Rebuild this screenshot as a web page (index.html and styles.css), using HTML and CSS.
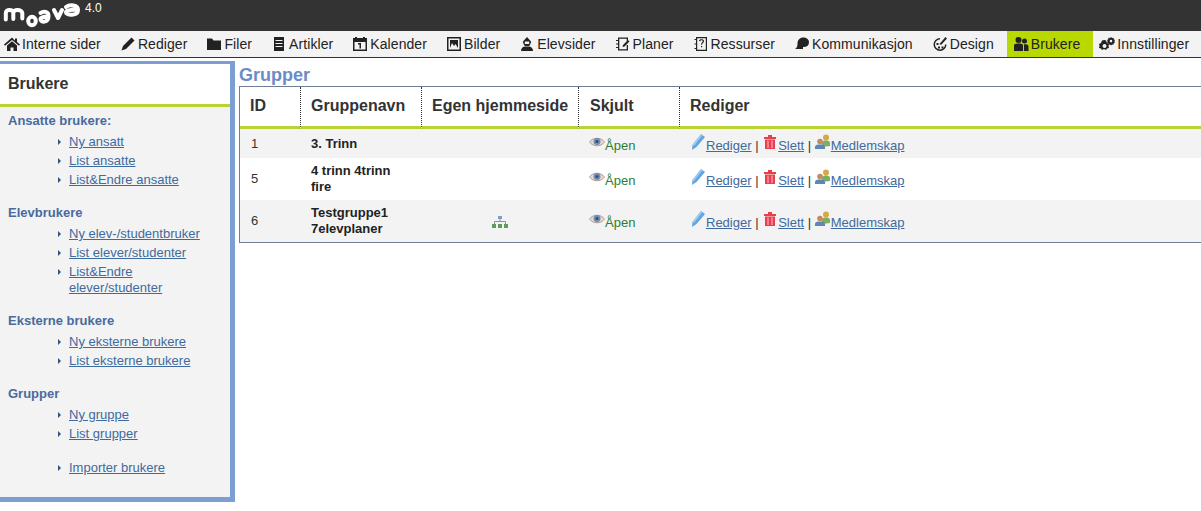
FILE: index.html
```html
<!DOCTYPE html>
<html lang="no">
<head>
<meta charset="utf-8">
<title>Moava - Grupper</title>
<link rel="stylesheet" href="styles.css">
</head>
<body>
<header class="topbar">
  <svg class="logo" width="82" height="30" viewBox="0 0 82 30" fill="none" stroke="#fff" stroke-width="4" stroke-linecap="round" stroke-linejoin="round">
    <path d="M5.800 19.500V13c0-4 7.500-4 7.500 0v6M13.300 13c0-4 8-4 9 0v5.500"/>
    <ellipse cx="32" cy="21" rx="3.800" ry="4.300"/>
    <path d="M40.500 13c3-2 8-2 8 3 0 7-8 7-8 3 0-2 4-2.500 8-2.500"/>
    <path d="M54 10l4 8 4-8"/>
    <path d="M66 7c4-3 12-2 12 3 0 6-12 6-12 2 0-2 6-2.500 12-2.500"/>
  </svg>
  <span class="version">4.0</span>
</header>
<nav class="mainnav">
  <a class="navitem" href="#"><svg class="navicon" viewBox="0 0 16 16"><path d="M8 1.500 0 8.500l1 1.300L8 4l7 5.800 1-1.300-3-2.600V2.500h-2v2.200zM3 9.500 8 5.300l5 4.200V15H9.500v-3.500h-3V15H3z"/></svg>Interne sider</a>
  <a class="navitem" href="#"><svg class="navicon" viewBox="0 0 16 16"><path d="M11.500 1.500l3 3-8.500 8.500-4.500 1.500 1.500-4.500z"/></svg>Rediger</a>
  <a class="navitem" href="#"><svg class="navicon" viewBox="0 0 16 16"><path d="M1 2.500h5l1.500 2H15v9.500H1z"/></svg>Filer</a>
  <a class="navitem" href="#"><svg class="navicon" viewBox="0 0 16 16"><path fill-rule="evenodd" d="M3 1h10v14H3zM4.500 4v1h7V4zm0 3v1h7V7zm0 3v1h7v-1z"/></svg>Artikler</a>
  <a class="navitem" href="#"><svg class="navicon" viewBox="0 0 16 16"><path fill-rule="evenodd" d="M1 2h14v13H1zM2.500 6v7.500h11V6z"/><path d="M6 7h3v5.500H7.500V8.500H6zM3 1h2v3H3zM11 1h2v3h-2z"/></svg>Kalender</a>
  <a class="navitem" href="#"><svg class="navicon" viewBox="0 0 16 16"><path fill-rule="evenodd" d="M1 1h14v14H1zM2.500 2.500v11h11v-11z"/><path d="M4 4h8v8l-2.500-4L8 10 6 7l-2 5z"/></svg>Bilder</a>
  <a class="navitem" href="#"><svg class="navicon" viewBox="0 0 16 16"><path fill-rule="evenodd" d="M8 1l4 4.500c0 1-.5 3-1.500 4l-.5.5H6l-.5-.5C4.500 8.500 4 6.500 4 5.500zM5.800 5.500V8h4.400V5.500z"/><path d="M2 15c0-3 2-4.500 4-4.500h4c2 0 4 1.500 4 4.500z"/></svg>Elevsider</a>
  <a class="navitem" href="#"><svg class="navicon" viewBox="0 0 16 16"><path d="M3 1.500h10v4h-1.300V2.800H4.300v10.400h7.400V9H13v5.500H3zM1 4h3v1H1zM1 7.500h3v1H1zM1 11h3v1H1zM8 9l5-5 1.500 1.500-5 5L7.500 11z"/></svg>Planer</a>
  <a class="navitem" href="#"><svg class="navicon" viewBox="0 0 16 16"><path fill-rule="evenodd" d="M3 1h11v14H3zM4.200 2.200v11.600h8.600V2.200z"/><path d="M1.500 3h2.500v1H1.500zM1.500 7.500h2.500v1H1.500zM1.500 12h2.500v1H1.500zM6 5c0-2.500 5-2.500 5 0 0 2-2 2-2 3.800H8C8 6.500 9.700 6.500 9.700 5c0-1-2.300-1-2.400.3zM8 10h1.200v1.300H8z"/></svg>Ressurser</a>
  <a class="navitem" href="#"><svg class="navicon" viewBox="0 0 16 16"><path d="M9 1.500c3.500 0 6 2 6 4.800s-2 4.700-4.500 4.700c-.5 0-1 0-1.500-.2V13H1c2-1 2.500-3 2.500-5.500C3.500 4 6 1.500 9 1.500z"/></svg>Kommunikasjon</a>
  <a class="navitem" href="#"><svg class="navicon" viewBox="0 0 16 16"><path fill-rule="evenodd" d="M8 2a6.500 6.500 0 1 0 6.500 6.500H13a5 5 0 1 1-5-5z"/><path d="M7.500 8 13.500 1l1.500 1.500L9 9zM4.500 7h2v2h-2zM6 10.500h2v2H6zM9.500 10.500h2v2h-2z"/></svg>Design</a>
  <a class="navitem active" href="#"><svg class="navicon" viewBox="0 0 16 16"><circle cx="5.500" cy="4" r="3"/><circle cx="11.500" cy="5" r="2.500"/><path d="M1 15V9.500C1 8 2.500 7.500 5.500 7.500S10 8 10 9.500V15zM11 15V8.500c2.500-.5 4.500 0 4.500 2V15z"/></svg>Brukere</a>
  <a class="navitem" href="#"><svg class="navicon" viewBox="0 0 16 16"><path fill-rule="evenodd" d="M5.500 5 7 5.500 8 8l2 1-.5 2 .5 2-2 .5-1 1.500-2-1-2 1-1-1.500L0 13l.5-2L0 9l2-1 1-2.500zm0 4a2 2 0 1 0 0 4 2 2 0 0 0 0-4z" transform="translate(0 -1)"/><path fill-rule="evenodd" d="M12 1l1 1 1.500-.2.200 1.500 1.300.7-.7 1.300.7 1.300-1.300.7-.2 1.500L13 8.500 12 9.500 11 8.500l-1.500.3-.2-1.500L8 6.500l.7-1.300L8 4l1.300-.7.2-1.500L11 2zm0 2.800a1.300 1.300 0 1 0 0 2.600 1.300 1.300 0 0 0 0-2.600z"/></svg>Innstillinger</a>
</nav>
<div class="layout">
  <aside class="sidebar">
    <h2 class="sidebar-title">Brukere</h2>
    <div class="sidebar-body">
      <section class="menu-group">
        <h3 class="menu-heading">Ansatte brukere:</h3>
        <ul class="menu-list">
          <li><a href="#">Ny ansatt</a></li>
          <li><a href="#">List ansatte</a></li>
          <li><a href="#">List&amp;Endre ansatte</a></li>
        </ul>
      </section>
      <section class="menu-group">
        <h3 class="menu-heading">Elevbrukere</h3>
        <ul class="menu-list">
          <li><a href="#">Ny elev-/studentbruker</a></li>
          <li><a href="#">List elever/studenter</a></li>
          <li><a href="#">List&amp;Endre elever/studenter</a></li>
        </ul>
      </section>
      <section class="menu-group">
        <h3 class="menu-heading">Eksterne brukere</h3>
        <ul class="menu-list">
          <li><a href="#">Ny eksterne brukere</a></li>
          <li><a href="#">List eksterne brukere</a></li>
        </ul>
      </section>
      <section class="menu-group">
        <h3 class="menu-heading">Grupper</h3>
        <ul class="menu-list">
          <li><a href="#">Ny gruppe</a></li>
          <li><a href="#">List grupper</a></li>
        </ul>
      </section>
      <ul class="menu-list menu-standalone">
        <li><a href="#">Importer brukere</a></li>
      </ul>
    </div>
  </aside>
  <main class="content">
    <h1 class="page-title">Grupper</h1>
    <table class="groups">
      <thead>
        <tr>
          <th class="col-id">ID</th>
          <th class="col-name">Gruppenavn</th>
          <th class="col-home">Egen hjemmeside</th>
          <th class="col-hidden">Skjult</th>
          <th class="col-edit">Rediger</th>
        </tr>
      </thead>
      <tbody>
        <tr class="row-short">
          <td>1</td><td class="name">3. Trinn</td><td></td>
          <td class="status-cell"><span class="status"><svg class="ic-eye" viewBox="0 0 16 12"><use href="#eye"/></svg>Åpen</span></td>
          <td class="actions"><svg class="ic" viewBox="0 0 16 16"><use href="#pen"/></svg><a href="#">Rediger</a> | <svg class="ic" viewBox="0 0 16 16"><use href="#trash"/></svg><a href="#">Slett</a> | <svg class="ic" viewBox="0 0 16 16"><use href="#people"/></svg><a href="#">Medlemskap</a></td>
        </tr>
        <tr>
          <td>5</td><td class="name">4 trinn 4trinn fire</td><td></td>
          <td class="status-cell"><span class="status"><svg class="ic-eye" viewBox="0 0 16 12"><use href="#eye"/></svg>Åpen</span></td>
          <td class="actions"><svg class="ic" viewBox="0 0 16 16"><use href="#pen"/></svg><a href="#">Rediger</a> | <svg class="ic" viewBox="0 0 16 16"><use href="#trash"/></svg><a href="#">Slett</a> | <svg class="ic" viewBox="0 0 16 16"><use href="#people"/></svg><a href="#">Medlemskap</a></td>
        </tr>
        <tr>
          <td>6</td><td class="name">Testgruppe1 7elevplaner</td>
          <td class="home-cell"><svg class="ic-tree" viewBox="0 0 16 12"><path fill="#7f9fc8" d="M6 0h4v3H6z"/><path fill="none" stroke="#8a9a8a" d="M8 3v3M2.500 8V5.500h11V8"/><path fill="#5f9a5f" d="M0 8h4v4H0zM6 8h4v4H6zM12 8h4v4h-4z"/></svg></td>
          <td class="status-cell"><span class="status"><svg class="ic-eye" viewBox="0 0 16 12"><use href="#eye"/></svg>Åpen</span></td>
          <td class="actions"><svg class="ic" viewBox="0 0 16 16"><use href="#pen"/></svg><a href="#">Rediger</a> | <svg class="ic" viewBox="0 0 16 16"><use href="#trash"/></svg><a href="#">Slett</a> | <svg class="ic" viewBox="0 0 16 16"><use href="#people"/></svg><a href="#">Medlemskap</a></td>
        </tr>
      </tbody>
    </table>
  </main>
</div>
<svg class="defs" width="0" height="0" aria-hidden="true">
  <defs>
    <g id="eye"><path fill="#ead9cf" stroke="#b59a90" d="M.5 6C4 1 12 1 15.500 6 12 11 4 11 .5 6z"/><circle cx="8" cy="5.500" r="3.500" fill="#6d8fb8"/><circle cx="8" cy="5.500" r="1.500" fill="#2f4f78"/></g>
    <g id="pen"><path fill="#62a5e0" d="M11 0l4 3-8.500 10L2 16l.5-5z"/><path fill="#9fcbf0" d="M11 0l1.500 1L4 12l-1.500-1z"/></g>
    <g id="trash"><path fill="#e8404a" d="M2 3h12v2H2zM6 1h4v2H6zM3 5.500h10V15H3z"/><path fill="#fbd" d="M5.500 6.500h1V14h-1zM9.500 6.500h1V14h-1z"/></g>
    <g id="people"><circle cx="11" cy="3.500" r="3" fill="#d8a848"/><path fill="#7cb060" d="M7 13V9c0-2 2-2.500 4-2.500s4 .5 4 2.500v3z"/><circle cx="5" cy="7.500" r="2.800" fill="#c58a60"/><path fill="#5f86b8" d="M0 15v-2c0-2 2-2.500 5-2.500s5 .5 5 2.500v2z"/></g>
  </defs>
</svg>
</body>
</html>
```

FILE: styles.css
```css
* { box-sizing: border-box; }
html, body { margin: 0; padding: 0; height: 511px; overflow: hidden; background: #fff; }
body { font-family: "Liberation Sans", Arial, sans-serif; color: #333; }

.topbar { height: 31px; background: #333; display: flex; align-items: flex-start; }
.logo { display: block; flex: none; }
.version { color: #fff; font-size: 12px; line-height: 14px; margin: 1px 0 0 3px; }

.mainnav { height: 27px; background: #f3f3f3; border-bottom: 1px solid #333; display: flex; white-space: nowrap; }
.navitem { display: flex; align-items: center; height: 26px; padding: 0 13px 0 6px; color: #222; font-size: 14px; letter-spacing: 0.08px; text-decoration: none; }
.navitem:first-child { padding-left: 4px; }
.navitem.active { background: #b9d800; }
.navicon { width: 16px; height: 16px; margin-right: 2px; fill: #222; flex: none; }

.layout { display: flex; align-items: flex-start; }

.sidebar { width: 235px; margin-top: 3px; flex: none; background: #f3f3f3; border: 3px solid #7c9ed2; border-bottom-width: 5px; border-left: 0; border-right-width: 5px; }
.sidebar-title { margin: 0; height: 43px; padding-left: 8px; background: #fff; border-bottom: 3px solid #b9d334; font-size: 16px; line-height: 39px; font-weight: bold; color: #333; }
.sidebar-body { padding: 5px 8px 18px; }
.menu-group { margin-bottom: 16px; }
.menu-heading { margin: 0; font-size: 13px; line-height: 18px; font-weight: bold; color: #4a6a9e; }
.menu-list { list-style: none; margin: 4px 0 0; padding: 0 0 0 61px; font-size: 13px; line-height: 16px; }
.menu-list.menu-standalone { margin-top: 18px; }
.menu-list li { position: relative; margin-bottom: 3px; }
.menu-list li::before { content: ""; position: absolute; left: -11px; top: 5px; border-left: 3px solid #2a5580; border-top: 3px solid transparent; border-bottom: 3px solid transparent; }
.menu-list a { color: #3f6a9e; text-decoration: underline; }

.content { flex: 1; min-width: 0; padding-left: 4px; overflow: hidden; }
.page-title { margin: 7px 0 0; font-size: 18px; line-height: 21px; font-weight: bold; color: #6a8cc6; }

.groups { width: 962px; table-layout: fixed; border-collapse: separate; border-spacing: 0; border: 1px solid #6c7f95; border-right: 0; font-size: 13px; }
.groups th { height: 42px; padding: 0 10px 2px; background: #fff; border-bottom: 3px solid #b9d334; border-left: 1px dotted #333; font-size: 16px; font-weight: bold; text-align: left; color: #333; white-space: nowrap; }
.groups th:first-child { border-left: 0; }
.groups .col-id { width: 60px; }
.groups .col-name { width: 121px; }
.groups .col-home { width: 157px; }
.groups .col-hidden { width: 101px; padding-left: 11px; }
.groups td { height: 42px; padding: 0 10px 0 11px; line-height: 16px; vertical-align: middle; }
.groups tr.row-short td { height: 29px; }
.groups tbody tr:nth-child(odd) td { background: #f3f3f3; }
.groups td.name { font-weight: bold; color: #222; }
.groups td.status-cell { padding-top: 2px; }
.home-cell { text-align: center; }
.ic-tree { width: 16px; height: 12px; display: inline-block; vertical-align: middle; }
.status { color: #2e7d32; white-space: nowrap; }
.ic-eye { width: 16px; height: 12px; vertical-align: 2px; }
.ic { width: 16px; height: 16px; vertical-align: 0; }
.actions { white-space: nowrap; color: #333; }
.actions a { color: #3f6a9e; text-decoration: underline; }
.defs { position: absolute; }
```
